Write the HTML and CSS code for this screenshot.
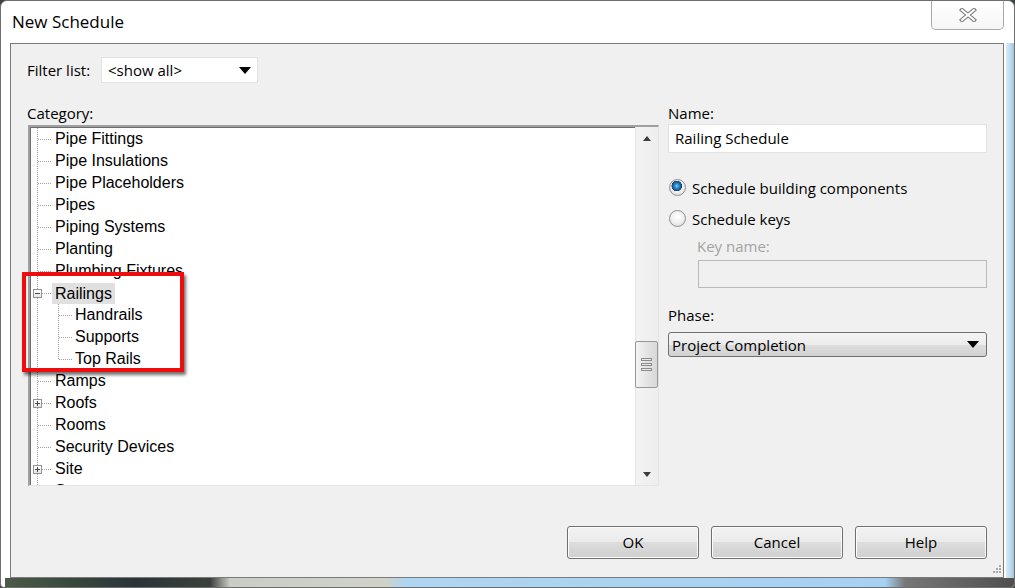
FILE: index.html
```html
<!DOCTYPE html>
<html lang="en">
<head>
<meta charset="utf-8">
<title>New Schedule</title>
<link rel="stylesheet" href="styles.css">
</head>
<body>
<div class="window">
  <div class="titlebar">
    <div class="title">New Schedule</div>
    <div class="close">
      <svg width="20" height="14" viewBox="0 0 20 14">
        <path d="M4 2 L16 12 M16 2 L4 12" stroke="#7a7a7a" stroke-width="4.2" stroke-linecap="square" fill="none"/>
        <path d="M4 2 L16 12 M16 2 L4 12" stroke="#ffffff" stroke-width="2" stroke-linecap="square" fill="none"/>
      </svg>
    </div>
  </div>
  <div class="middle">
    <div class="frame-left"></div>
    <div class="panel">
      <div class="filter-row">
        <span class="filter-label">Filter list:</span>
        <div class="combo-white"><span>&lt;show all&gt;</span><span class="tri"></span></div>
      </div>
      <div class="main">
        <div class="left">
          <div class="label cat">Category:</div>
          <div class="tree">
            <div class="tree-list">
              <div class="node"><span class="g"></span><span class="lbl">Pipe Fittings</span></div>
              <div class="node"><span class="g"></span><span class="lbl">Pipe Insulations</span></div>
              <div class="node"><span class="g"></span><span class="lbl">Pipe Placeholders</span></div>
              <div class="node"><span class="g"></span><span class="lbl">Pipes</span></div>
              <div class="node"><span class="g"></span><span class="lbl">Piping Systems</span></div>
              <div class="node"><span class="g"></span><span class="lbl">Planting</span></div>
              <div class="node"><span class="g"></span><span class="lbl">Plumbing Fixtures</span></div>
              <div class="node"><span class="g"><span class="exp"></span></span><span class="lbl sel">Railings</span></div>
              <div class="node"><span class="g pass"></span><span class="g2"></span><span class="lbl">Handrails</span></div>
              <div class="node"><span class="g pass"></span><span class="g2"></span><span class="lbl">Supports</span></div>
              <div class="node"><span class="g pass"></span><span class="g2 last"></span><span class="lbl">Top Rails</span></div>
              <div class="node"><span class="g"></span><span class="lbl">Ramps</span></div>
              <div class="node"><span class="g"><span class="exp plus"></span></span><span class="lbl">Roofs</span></div>
              <div class="node"><span class="g"></span><span class="lbl">Rooms</span></div>
              <div class="node"><span class="g"></span><span class="lbl">Security Devices</span></div>
              <div class="node"><span class="g"><span class="exp plus"></span></span><span class="lbl">Site</span></div>
              <div class="node"><span class="g"></span><span class="lbl">Spaces</span></div>
            </div>
            <div class="vscroll">
              <div class="sbtn"><span class="arr up"></span></div>
              <div class="track">
                <div class="thumb"><span></span><span></span><span></span></div>
              </div>
              <div class="sbtn"><span class="arr down"></span></div>
            </div>
          </div>
          <div class="redbox"></div>
        </div>
        <div class="right">
          <div class="label name-label">Name:</div>
          <div class="input name-input">Railing Schedule</div>
          <div class="radios">
            <div class="radio-row"><span class="radio checked"></span><span>Schedule building components</span></div>
            <div class="radio-row"><span class="radio"></span><span>Schedule keys</span></div>
          </div>
          <div class="label key-label">Key name:</div>
          <div class="input key-input"></div>
          <div class="label phase-label">Phase:</div>
          <div class="combo-phase"><span>Project Completion</span><span class="tri"></span></div>
        </div>
      </div>
      <div class="buttons">
        <div class="btn">OK</div>
        <div class="btn">Cancel</div>
        <div class="btn">Help</div>
      </div>
      <svg class="grip" width="10" height="10" viewBox="0 0 10 10">
        <g fill="#a8a8a8">
          <rect x="8" y="0" width="2" height="2"/>
          <rect x="5" y="3" width="2" height="2"/><rect x="8" y="3" width="2" height="2"/>
          <rect x="2" y="6" width="2" height="2"/><rect x="5" y="6" width="2" height="2"/><rect x="8" y="6" width="2" height="2"/>
        </g>
      </svg>
    </div>
    <div class="frame-right"></div>
  </div>
  <div class="bottom-strip"></div>
</div>
</body>
</html>
```
FILE: styles.css
```css
* { box-sizing: border-box; }
html, body { margin: 0; padding: 0; }
body {
  width: 1015px;
  height: 588px;
  overflow: hidden;
  background: #3a4540;
  font-family: "Open Sans", "Noto Sans", sans-serif;
  color: #000;
}
.window {
  width: 1015px;
  height: 588px;
  border: 1px solid #6e6e6e;
  border-radius: 7px 7px 4px 4px;
  background: #ffffff;
  display: flex;
  flex-direction: column;
  overflow: hidden;
}
.titlebar {
  height: 42px;
  display: flex;
  align-items: flex-start;
  flex: none;
}
.title {
  margin-left: 11px;
  margin-top: 9px;
  font-size: 17px;
  line-height: 24px;
}
.close {
  margin-left: auto;
  margin-right: 10px;
  margin-top: -1px;
  width: 73px;
  height: 30px;
  border: 1px solid #a9a9a9;
  border-top: none;
  border-radius: 0 0 5px 5px;
  background: linear-gradient(#ffffff, #f6f6f6);
  display: flex;
  align-items: center;
  justify-content: center;
}
.middle {
  display: flex;
  height: 535px;
  flex: none;
}
.frame-left { width: 9px; background: #fff; }
.frame-right {
  width: 10px;
  background: linear-gradient(to right, #ffffff 0 2px, #d9ebf7 2px, #bcd8ec 70%, #9fc3de);
}
.panel {
  position: relative;
  width: 994px;
  border: 1px solid #7a7a7a;
  background: #f0f0f0;
  padding: 13px 16px 18px 16px;
  display: flex;
  flex-direction: column;
}
.filter-row {
  height: 26px;
  display: flex;
  align-items: center;
}
.filter-label {
  width: 74px;
  font-size: 15px;
}
.combo-white {
  width: 157px;
  height: 26px;
  background: #fff;
  border: 1px solid #e2e2e2;
  display: flex;
  align-items: center;
  justify-content: space-between;
  padding: 0 6px 0 6px;
  font-size: 15px;
}
.tri {
  width: 0; height: 0;
  border-left: 6px solid transparent;
  border-right: 6px solid transparent;
  border-top: 7px solid #000;
}
.main {
  display: flex;
  margin-top: 20px;
}
.left {
  position: relative;
  width: 632px;
}
.label {
  font-size: 15px;
}
.cat { height: 22px; line-height: 20px; }
.tree {
  margin-left: 1px;
  width: 631px;
  height: 361px;
  border-top: 2px solid #a0a0a0;
  border-left: 2px solid #a0a0a0;
  border-right: 1px solid #e4e4e4;
  border-bottom: 1px solid #e4e4e4;
  box-shadow: inset 1px 1px 0 #6d6d6d;
  background: #fff;
  display: flex;
  overflow: hidden;
}
.tree-list {
  flex: 1;
  overflow: hidden;
  padding-top: 1px;
  font-family: "Liberation Sans", Arial, sans-serif;
  font-size: 16px;
}
.node {
  height: 22px;
  display: flex;
  align-items: stretch;
  white-space: nowrap;
}
.g, .g2 {
  position: relative;
  flex: none;
  height: 22px;
}
.g { width: 22px; }
.g2 { width: 20px; }
.g::before, .g2::before {
  content: "";
  position: absolute;
  top: 0; bottom: 0;
  width: 1px;
  background: repeating-linear-gradient(to bottom, #a0a0a0 0 1px, transparent 1px 2px);
}
.g::before { left: 7px; }
.g2::before { left: 6px; }
.g2.last::before { bottom: 11px; }
.g::after, .g2::after {
  content: "";
  position: absolute;
  top: 11px;
  height: 1px;
  background: repeating-linear-gradient(to right, #a0a0a0 0 1px, transparent 1px 2px);
}
.g::after { left: 8px; width: 14px; }
.g2::after { left: 7px; width: 13px; }
.g.pass::after { display: none; }
.exp {
  position: absolute;
  z-index: 1;
  left: 3px;
  top: 7px;
  width: 9px;
  height: 9px;
  border: 1px solid #939393;
  background: linear-gradient(#ffffff, #e6e6e6);
}
.exp::before {
  content: "";
  position: absolute;
  left: 1px; top: 3px;
  width: 5px; height: 1px;
  background: #4a4a4a;
}
.exp.plus::after {
  content: "";
  position: absolute;
  left: 3px; top: 1px;
  width: 1px; height: 5px;
  background: #4a4a4a;
}
.lbl {
  padding: 0 3px;
  line-height: 22px;
}
.lbl.sel {
  background: #e0e0e0;
  line-height: 21px;
  margin-top: 1px;
}
.vscroll {
  width: 23px;
  flex: none;
  display: flex;
  flex-direction: column;
  background: linear-gradient(to right, #e6e6e6 0 1px, #f3f3f3 1px, #eeeeee);
}
.sbtn {
  height: 22px;
  display: flex;
  align-items: center;
  justify-content: center;
  flex: none;
}
.arr {
  width: 0; height: 0;
  border-left: 4px solid transparent;
  border-right: 4px solid transparent;
}
.arr.up { border-bottom: 5px solid #3c3c3c; }
.arr.down { border-top: 5px solid #3c3c3c; }
.track { flex: 1; }
.thumb {
  margin-top: 192px;
  height: 47px;
  border: 1px solid #979797;
  border-radius: 2px;
  background: linear-gradient(to right, #f4f4f4, #e4e4e4 50%, #d8d8d8);
  display: flex;
  flex-direction: column;
  align-items: center;
  justify-content: center;
  gap: 2px;
}
.thumb span {
  width: 11px;
  height: 3px;
  border: 1px solid #8c8c8c;
  background: #e8e8e8;
}
.redbox {
  position: absolute;
  left: -5px;
  top: 169px;
  width: 162px;
  height: 100px;
  border: 4px solid #ee0d0d;
  box-shadow: 2px 3px 3px rgba(0,0,0,0.55);
}
.right {
  margin-left: 9px;
  width: 319px;
  display: flex;
  flex-direction: column;
}
.name-label { height: 21px; line-height: 20px; }
.input {
  font-size: 15px;
}
.name-input {
  height: 29px;
  background: #fff;
  border: 1px solid #e2e2e2;
  padding-left: 6px;
  line-height: 27px;
}
.radios { margin-top: 19px; }
.radio-row {
  height: 31px;
  display: flex;
  align-items: center;
  font-size: 15px;
}
.radio {
  width: 17px;
  height: 17px;
  margin-left: 1px;
  margin-right: 6px;
  border-radius: 50%;
  border: 1px solid #8c8e8f;
  background: radial-gradient(circle at 50% 40%, #ffffff 0, #f0f0f0 50%, #d4d4d4 100%);
}
.radio.checked {
  background:
    radial-gradient(circle at 45% 40%, #8fd4ff 0, #2b8fd0 2px, #19609a 4px, #1a3f66 5px, transparent 5.5px),
    radial-gradient(circle at 50% 40%, #ffffff 0, #f0f0f0 50%, #d4d4d4 100%);
}
.key-label {
  margin-left: 29px;
  height: 24px;
  line-height: 24px;
  color: #a3a3a3;
}
.key-input {
  margin-left: 30px;
  margin-top: 2px;
  height: 28px;
  border: 1px solid #b9b9b9;
  background: #f0f0f0;
}
.phase-label {
  margin-top: 17px;
  height: 20px;
  line-height: 20px;
}
.combo-phase {
  margin-top: 7px;
  height: 25px;
  border: 1px solid #707070;
  border-radius: 3px;
  background: linear-gradient(#f4f4f4, #ececec 50%, #dddddd 51%, #d2d2d2);
  display: flex;
  align-items: center;
  justify-content: space-between;
  padding: 0 7px 0 3px;
  font-size: 15px;
}
.buttons {
  margin-top: auto;
  display: flex;
  justify-content: flex-end;
  gap: 12px;
}
.btn {
  width: 132px;
  height: 33px;
  border: 1px solid #707070;
  border-radius: 3px;
  background: linear-gradient(#f2f2f2, #ebebeb 48%, #dddddd 50%, #cfcfcf);
  box-shadow: inset 0 0 0 1px #fcfcfc;
  display: flex;
  align-items: center;
  justify-content: center;
  font-size: 15px;
  padding-bottom: 2px;
}
.grip {
  position: absolute;
  right: 2px;
  bottom: 2px;
}
.bottom-strip {
  height: 9px;
  flex: none;
  margin-left: 4px;
  background: linear-gradient(to right,
    #4d5c48 0, #3a4a3e 60px, #2a3438 130px, #39413a 200px, #3a3d3c 205px,
    #c9cdc6 225px, #d0d2c8 380px, #aed5f2 400px, #a6d1f3 880px,
    #777 900px, #4e4e4e 1010px);
}
```
